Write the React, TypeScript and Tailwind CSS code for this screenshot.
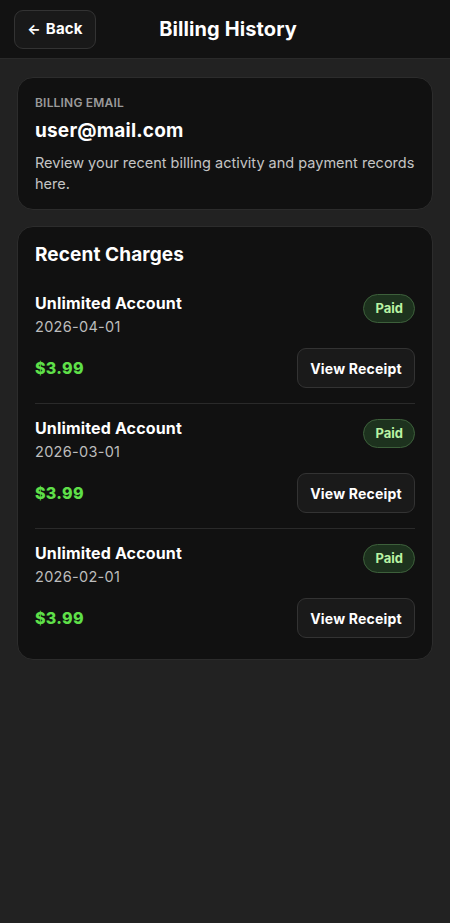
import React from "react";

interface Charge {
  id: string;
  plan: string;
  date: string;
  amount: string;
  status: string;
}

const charges: Charge[] = [
  { id: "c1", plan: "Unlimited Account", date: "2026-04-01", amount: "$3.99", status: "Paid" },
  { id: "c2", plan: "Unlimited Account", date: "2026-03-01", amount: "$3.99", status: "Paid" },
  { id: "c3", plan: "Unlimited Account", date: "2026-02-01", amount: "$3.99", status: "Paid" },
];

export default function App() {
  return (
    <div
      className="min-h-[923px] bg-[#222222] text-white"
      style={{ fontFamily: "Inter, 'Noto Sans', sans-serif" }}
    >
      <header className="h-[59px] bg-[#121212] border-b border-[#2a2a2a] grid grid-cols-[96px_1fr_90px] items-center px-[14px]">
        <button
          type="button"
          className="h-[39px] w-[82px] rounded-[9px] border border-[#333333] bg-[#191919] text-[15px] font-bold tracking-[0.2px] flex items-center justify-center gap-[5px]"
        >
          <span className="text-[14px] leading-none">←</span>
          Back
        </button>
        <h1 className="text-center text-[20px] font-bold tracking-[0.1px]">Billing History</h1>
        <div />
      </header>

      <main className="px-[17px] pt-[18px] flex flex-col gap-[16px]">
        <section className="rounded-[16px] border border-[#2c2c2c] bg-[#111111] px-[17px] pt-[17px] pb-[15px]">
          <p className="text-[12px] leading-[16px] font-semibold uppercase tracking-[0.2px] text-[#9a9a9a]">Billing email</p>
          <p className="mt-[7px] text-[19px] leading-[26px] font-bold tracking-[0.2px]">user@mail.com</p>
          <p className="mt-[8px] text-[14.5px] leading-[21px] text-[#c4c4c4]">
            Review your recent billing activity and payment records here.
          </p>
        </section>

        <section className="rounded-[16px] border border-[#2c2c2c] bg-[#111111] px-[17px] pt-[16px] pb-[6px]">
          <h2 className="text-[19px] leading-[24px] font-bold tracking-[0.1px] mb-[12px]">Recent Charges</h2>
          <ul>
            {charges.map((c, i) => (
              <li
                key={c.id}
                className={`pt-[13px] pb-[15px] ${i < charges.length - 1 ? "border-b border-[#2a2a2a]" : ""}`}
              >
                <div className="flex items-start justify-between">
                  <div>
                    <p className="text-[16px] leading-[22px] font-bold tracking-[0.15px]">{c.plan}</p>
                    <p className="mt-[3px] text-[14.5px] leading-[20px] text-[#bdbdbd] tracking-[0.3px]">{c.date}</p>
                  </div>
                  <span className="mt-[2px] h-[29px] px-[11px] rounded-full border border-[#3d603b] bg-[#1d321e] text-[13px] font-bold text-[#b9f3a3] flex items-center">
                    {c.status}
                  </span>
                </div>
                <div className="mt-[11px] flex items-center justify-between">
                  <span className="text-[16px] font-extrabold tracking-[0.3px] text-[#5fe049]">{c.amount}</span>
                  <button
                    type="button"
                    className="h-[40px] w-[118px] rounded-[9px] border border-[#333333] bg-[#1a1a1a] text-[14px] font-bold tracking-[0.2px]"
                  >
                    View Receipt
                  </button>
                </div>
              </li>
            ))}
          </ul>
        </section>
      </main>
    </div>
  );
}
